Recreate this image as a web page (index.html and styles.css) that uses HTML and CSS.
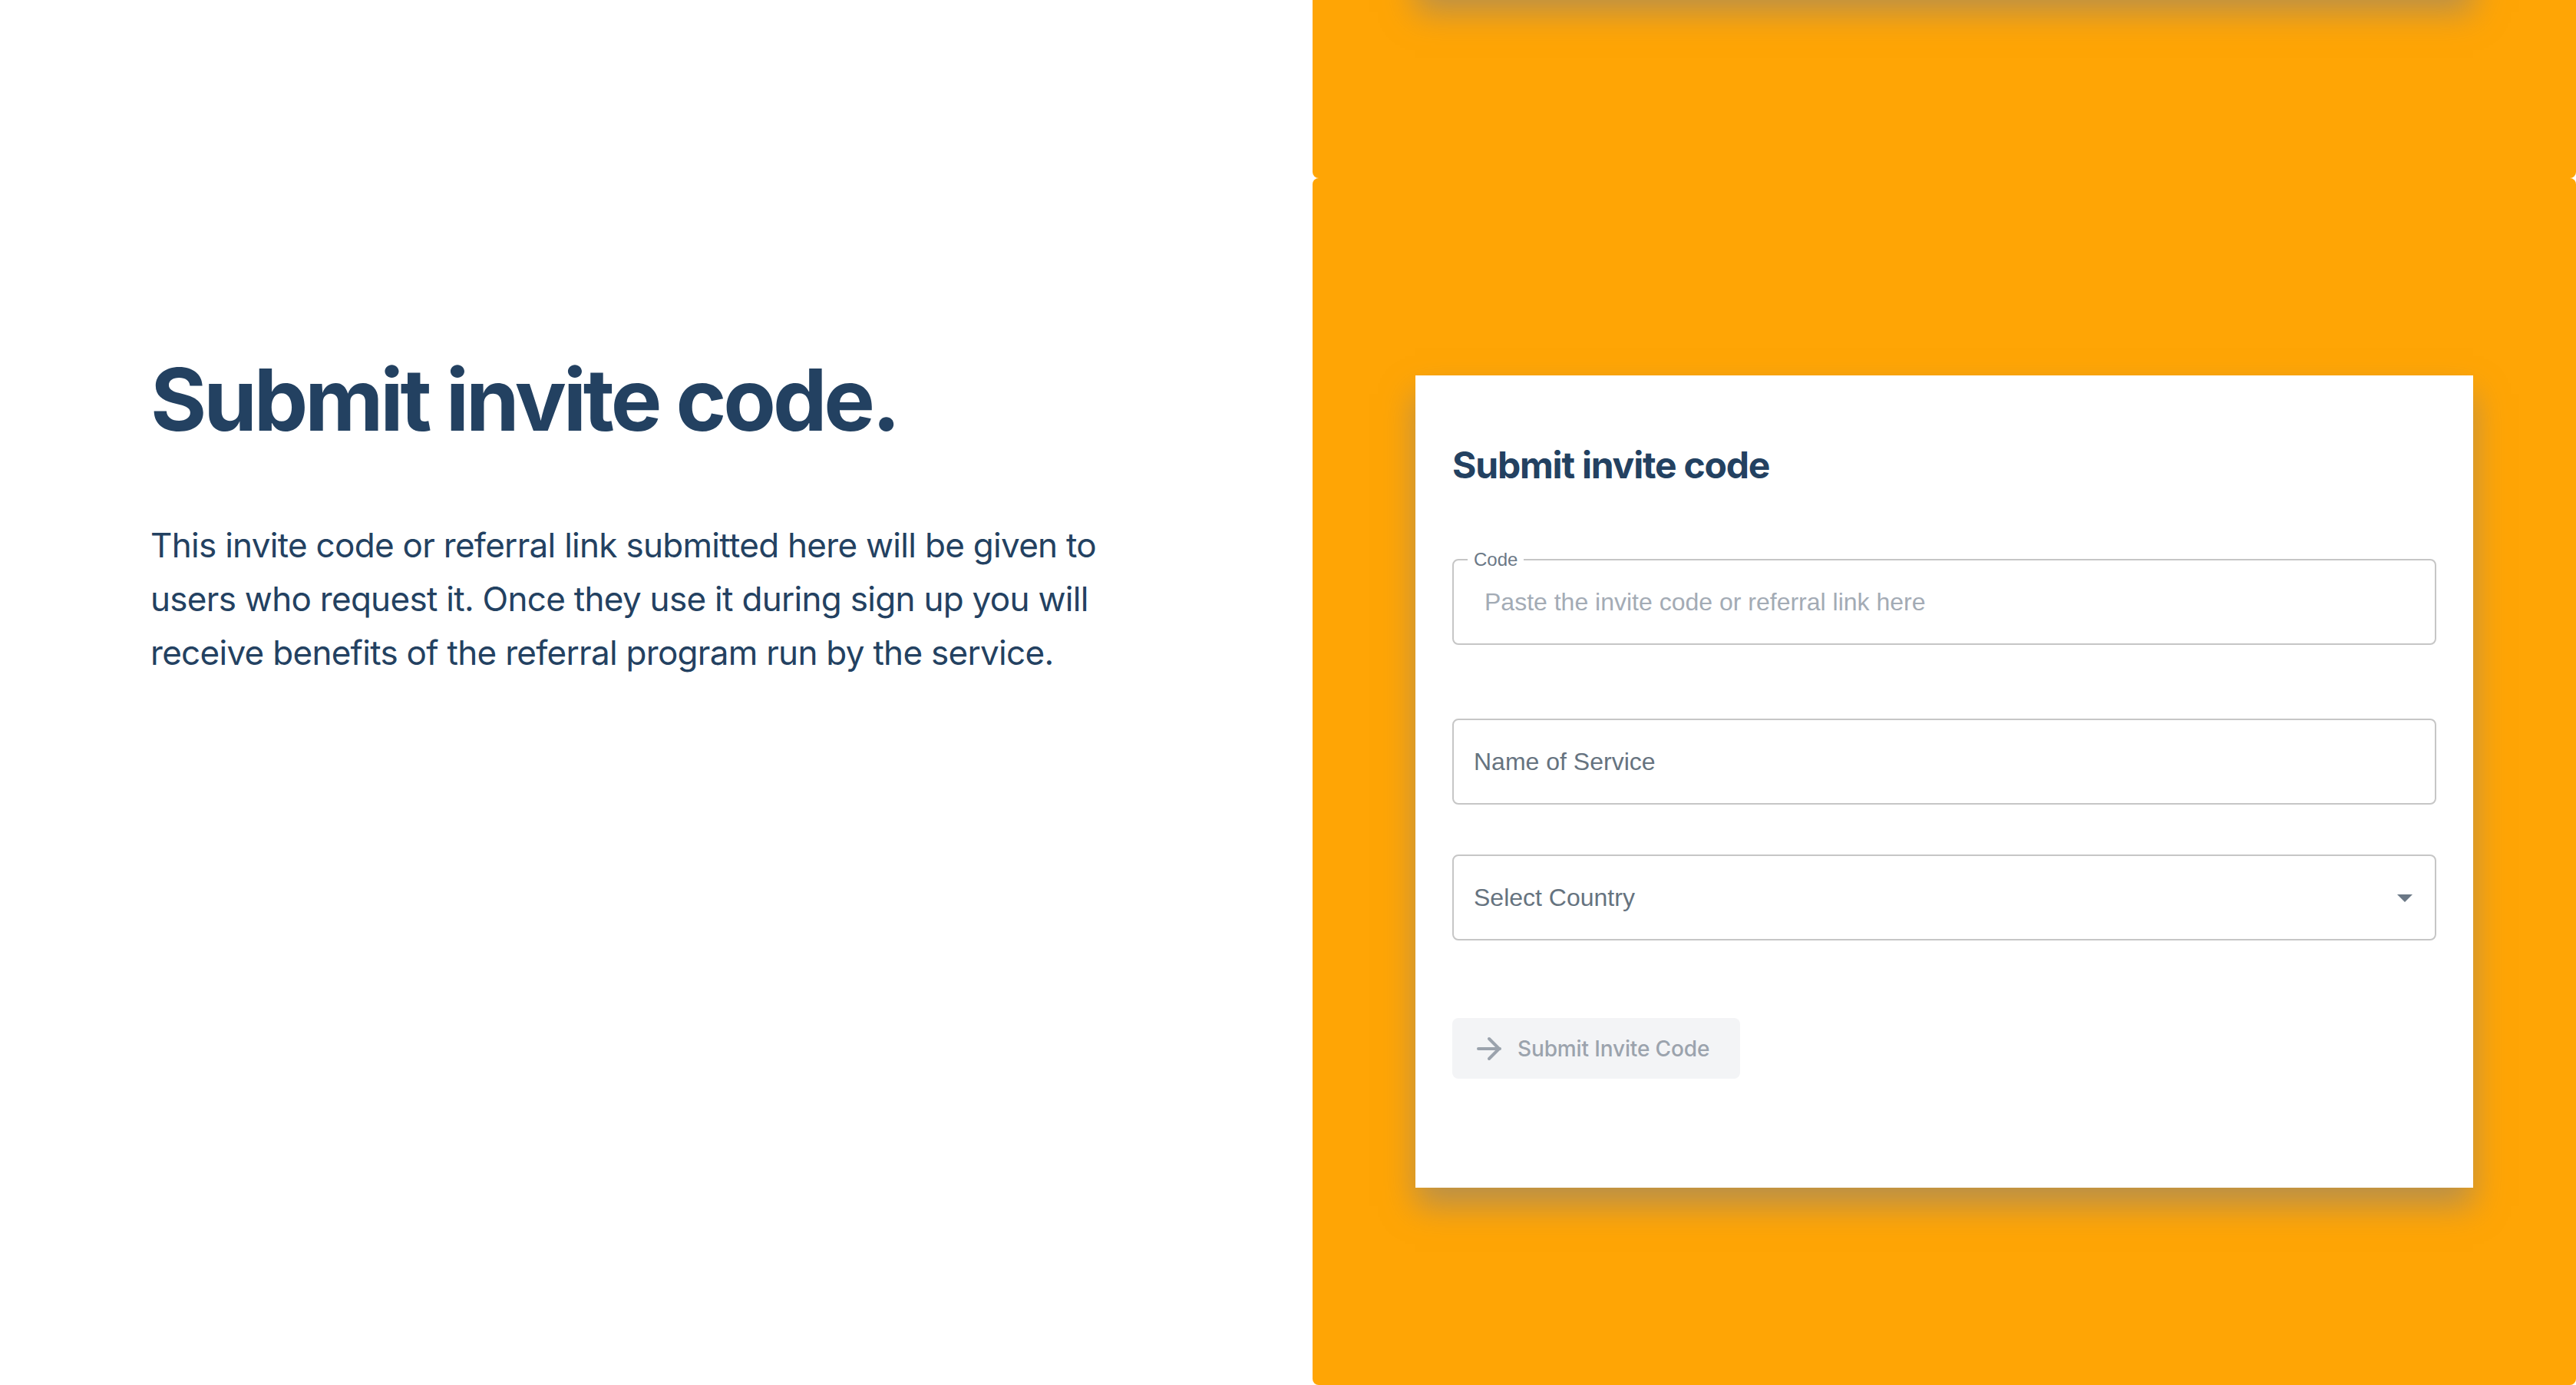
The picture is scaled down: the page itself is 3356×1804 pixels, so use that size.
FILE: index.html
```html
<!DOCTYPE html>
<html lang="en">
<head>
<meta charset="utf-8">
<title>Submit invite code</title>
<link rel="stylesheet" href="styles.css">
</head>
<body>
<div class="page">
  <section class="prev">
    <div class="prev-side"></div>
    <div class="prev-panel"><div class="prev-card"></div></div>
  </section>
  <section class="hero">
    <div class="intro">
      <h1 class="intro-title">Submit invite code.</h1>
      <p class="intro-text">This invite code or referral link submitted here will be given to users who request it. Once they use it during sign up you will receive benefits of the referral program run by the service.</p>
    </div>
    <div class="panel">
      <form class="card">
        <h2 class="card-title">Submit invite code</h2>
        <div class="field field-code">
          <span class="field-label">Code</span>
          <input class="field-input" type="text" placeholder="Paste the invite code or referral link here">
        </div>
        <div class="field field-name">
          <span class="field-text">Name of Service</span>
        </div>
        <div class="field field-select">
          <span class="field-text">Select Country</span>
          <svg class="select-arrow" viewBox="0 0 24 24" aria-hidden="true"><path d="M7 10l5 5 5-5z"/></svg>
        </div>
        <button class="submit" type="button" disabled>
          <svg class="submit-icon" viewBox="0 0 24 24" aria-hidden="true"><line x1="5" y1="12" x2="19" y2="12"/><polyline points="12 5.5 18.5 12 12 18.5"/></svg>
          <span class="submit-text">Submit Invite Code</span>
        </button>
      </form>
    </div>
  </section>
</div>
</body>
</html>
```
FILE: styles.css
```css
html, body {
  margin: 0;
  padding: 0;
}

body {
  background: #ffffff;
  font-family: Inter, "Noto Sans", sans-serif;
  overflow: hidden;
}

.page {
  display: flex;
  flex-direction: column;
}

/* bottom of the previous section, scrolled mostly out of view */
.prev {
  display: flex;
  height: 232px;
}

.prev-side {
  width: 1710px;
  flex: none;
}

.prev-panel {
  flex: 1;
  background: #ffa505;
  border-radius: 0 0 8px 8px;
  overflow: hidden;
  display: flex;
  justify-content: center;
}

.prev-card {
  width: 1378px;
  height: 300px;
  margin-top: -308px;
  background: #ffffff;
  box-shadow: 0 24px 40px rgba(128, 128, 132, 0.55);
}

/* main section */
.hero {
  display: flex;
  height: 1572px;
}

.intro {
  width: 1710px;
  flex: none;
  box-sizing: border-box;
  padding: 221px 0 0 196px;
}

.intro-title {
  margin: 0;
  font-size: 112px;
  line-height: 1.2;
  font-weight: 700;
  letter-spacing: -0.037em;
  color: #234161;
}

.intro-text {
  margin: 88px 0 0;
  max-width: 1270px;
  font-size: 44px;
  line-height: 70px;
  font-weight: 400;
  letter-spacing: -0.016em;
  color: #234161;
}

.panel {
  flex: 1;
  background: #ffa505;
  border-radius: 8px;
  display: flex;
  align-items: center;
  justify-content: center;
}

.card {
  width: 1378px;
  box-sizing: border-box;
  background: #ffffff;
  padding: 88px 48px 142px;
  box-shadow: 0 24px 40px rgba(128, 128, 132, 0.55);
  display: flex;
  flex-direction: column;
  align-items: flex-start;
}

.card-title {
  margin: 0;
  font-size: 48px;
  line-height: 1.2;
  font-weight: 700;
  letter-spacing: -0.025em;
  color: #234161;
}

.field {
  position: relative;
  width: 100%;
  height: 112px;
  box-sizing: border-box;
  border: 2px solid #c6c6c6;
  border-radius: 8px;
  display: flex;
  align-items: center;
}

.field-code {
  margin-top: 94px;
}

.field-name {
  margin-top: 96px;
}

.field-select {
  margin-top: 65px;
  padding-right: 15px;
}

.field-label {
  position: absolute;
  top: -15px;
  left: 18px;
  padding: 0 8px;
  background: #ffffff;
  font-family: "Liberation Sans", Arial, sans-serif;
  font-size: 24px;
  line-height: 28px;
  color: #6b7886;
}

.field-input {
  width: 100%;
  height: 100%;
  box-sizing: border-box;
  border: 0;
  outline: 0;
  border-radius: 8px;
  background: transparent;
  padding: 0 40px;
  font-family: "Liberation Sans", Arial, sans-serif;
  font-size: 32px;
  color: #333333;
}

.field-input::placeholder {
  color: #a3abb5;
  opacity: 1;
}

.field-text {
  flex: 1;
  padding-left: 26px;
  font-family: "Liberation Sans", Arial, sans-serif;
  font-size: 32px;
  line-height: 1.2;
  color: #66737f;
}

.select-arrow {
  width: 48px;
  height: 48px;
  fill: #6b7886;
  flex: none;
}

.submit {
  margin-top: 101px;
  height: 79px;
  box-sizing: border-box;
  padding: 0 40px 0 24px;
  border: 0;
  border-radius: 8px;
  background: #f3f4f6;
  display: flex;
  align-items: center;
  font-family: Inter, "Noto Sans", sans-serif;
  font-size: 28px;
  font-weight: 500;
  letter-spacing: -0.005em;
  color: #9ba3ad;
  cursor: default;
}

.submit-icon {
  width: 48px;
  height: 48px;
  margin-right: 13px;
  fill: none;
  stroke: currentColor;
  stroke-width: 2;
  stroke-linecap: round;
  stroke-linejoin: round;
  flex: none;
}
```
